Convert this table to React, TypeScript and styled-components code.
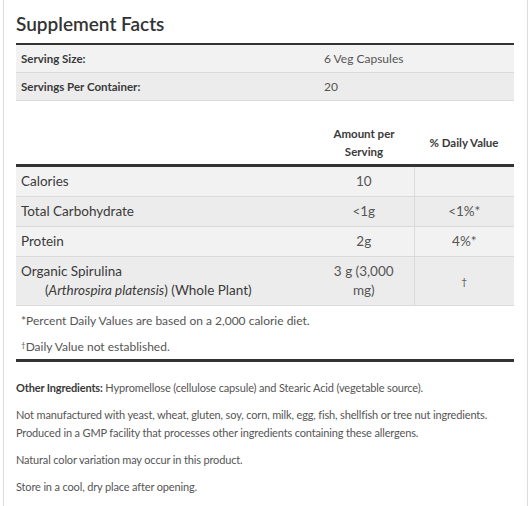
import React from "react";
import styled, { createGlobalStyle } from "styled-components";

const Global = createGlobalStyle`
  html, body { margin: 0; padding: 0; background: #fff; }
  body { font-family: Lato, "Open Sans", sans-serif; color: #333; }
`;

const Frame = styled.div`
  margin-left: 3px;
  width: 525px;
  min-height: 506px;
  box-sizing: border-box;
  border-left: 1px solid #dcdcdc;
  border-right: 1px solid #dcdcdc;
  padding: 0 13px 0 12px;
`;

const Title = styled.h2`
  margin: 0;
  padding-top: 12px;
  padding-bottom: 7px;
  font-size: 19px;
  line-height: 24px;
  font-weight: 600;
  color: #333;
`;

const Table = styled.table`
  width: 100%;
  border-collapse: collapse;
  border-top: 2px solid #333;
`;

const Row = styled.tr<{ $alt?: boolean }>`
  background: ${(p) => (p.$alt ? "#ececec" : "#f2f2f2")};
  border-bottom: 1px solid #dadada;
`;

const InfoLabel = styled.td`
  font-size: 11.5px;
  font-weight: 700;
  color: #3a3a3a;
  padding: 5px 5px;
  line-height: 17px;
  width: 292px;
`;

const InfoValue = styled.td`
  font-size: 12px;
  color: #555;
  padding: 5px 6px;
  line-height: 17px;
`;

const NutrientTable = styled.table`
  width: 100%;
  border-collapse: collapse;
  table-layout: fixed;
  margin-top: 21px;
`;

const Col = styled.col<{ $w?: number }>`
  width: ${(p) => (p.$w ? `${p.$w}px` : "auto")};
`;

const HeadCell = styled.th`
  font-size: 11.5px;
  font-weight: 700;
  color: #3a3a3a;
  line-height: 18px;
  padding: 3px 4px;
  text-align: center;
  vertical-align: middle;
  border-bottom: 3px solid #333;
`;

const NameCell = styled.td`
  font-size: 13.5px;
  color: #3a3a3a;
  line-height: 19px;
  padding: 5px 5px;
  vertical-align: middle;
`;

const Indent = styled.span`
  display: block;
  padding-left: 24px;
`;

const NumCell = styled.td<{ $divider?: boolean; $small?: boolean }>`
  font-size: ${(p) => (p.$small ? "10px" : "13.5px")};
  color: #555;
  line-height: 19px;
  padding: 5px 10px;
  text-align: center;
  vertical-align: middle;
  border-left: ${(p) => (p.$divider ? "1px solid #dadada" : "none")};
`;

const Footnotes = styled.div`
  padding-top: 6px;
  padding-bottom: 3px;
  border-bottom: 3px solid #333;
`;

const Note = styled.p`
  margin: 0 0 8px;
  font-size: 12px;
  line-height: 18px;
  color: #555;
  padding: 0 5px;
  &:last-child { margin-bottom: 0; }
`;

const Dagger = styled.span`
  font-size: 8px;
  line-height: 0;
  vertical-align: 3px;
`;

const Ingredients = styled.div`
  padding-top: 17px;
`;

const Para = styled.p`
  margin: 0 0 9px;
  font-size: 11px;
  letter-spacing: -0.15px;
  line-height: 18px;
  color: #555;
`;

const Strong = styled.strong`
  font-weight: 700;
  color: #3a3a3a;
`;

const nutrients = [
  { name: "Calories", amount: "10", dv: "" },
  { name: "Total Carbohydrate", amount: "<1g", dv: "<1%*" },
  { name: "Protein", amount: "2g", dv: "4%*" },
];

export default function App() {
  return (
    <>
      <Global />
      <Frame>
        <Title>Supplement Facts</Title>
        <Table>
          <tbody>
            <Row>
              <InfoLabel>Serving Size:</InfoLabel>
              <InfoValue>6 Veg Capsules</InfoValue>
            </Row>
            <Row $alt>
              <InfoLabel>Servings Per Container:</InfoLabel>
              <InfoValue>20</InfoValue>
            </Row>
          </tbody>
        </Table>
        <NutrientTable>
          <colgroup>
            <Col />
            <Col $w={100} />
            <Col $w={100} />
          </colgroup>
          <thead>
            <tr>
              <HeadCell />
              <HeadCell>
                Amount per
                <br />
                Serving
              </HeadCell>
              <HeadCell>% Daily Value</HeadCell>
            </tr>
          </thead>
          <tbody>
            {nutrients.map((n, i) => (
              <Row key={n.name} $alt={i % 2 === 1}>
                <NameCell>{n.name}</NameCell>
                <NumCell>{n.amount}</NumCell>
                <NumCell $divider>{n.dv}</NumCell>
              </Row>
            ))}
            <Row $alt>
              <NameCell>
                Organic Spirulina
                <Indent>
                  (<i>Arthrospira platensis</i>) (Whole Plant)
                </Indent>
              </NameCell>
              <NumCell>3 g (3,000 mg)</NumCell>
              <NumCell $divider $small>
                †
              </NumCell>
            </Row>
          </tbody>
        </NutrientTable>
        <Footnotes>
          <Note>*Percent Daily Values are based on a 2,000 calorie diet.</Note>
          <Note>
            <Dagger>†</Dagger>Daily Value not established.
          </Note>
        </Footnotes>
        <Ingredients>
          <Para>
            <Strong>Other Ingredients:</Strong> Hypromellose (cellulose capsule) and Stearic Acid (vegetable source).
          </Para>
          <Para>
            Not manufactured with yeast, wheat, gluten, soy, corn, milk, egg, fish, shellfish or tree nut ingredients.
            <br />
            Produced in a GMP facility that processes other ingredients containing these allergens.
          </Para>
          <Para>Natural color variation may occur in this product.</Para>
          <Para>Store in a cool, dry place after opening.</Para>
        </Ingredients>
      </Frame>
    </>
  );
}
